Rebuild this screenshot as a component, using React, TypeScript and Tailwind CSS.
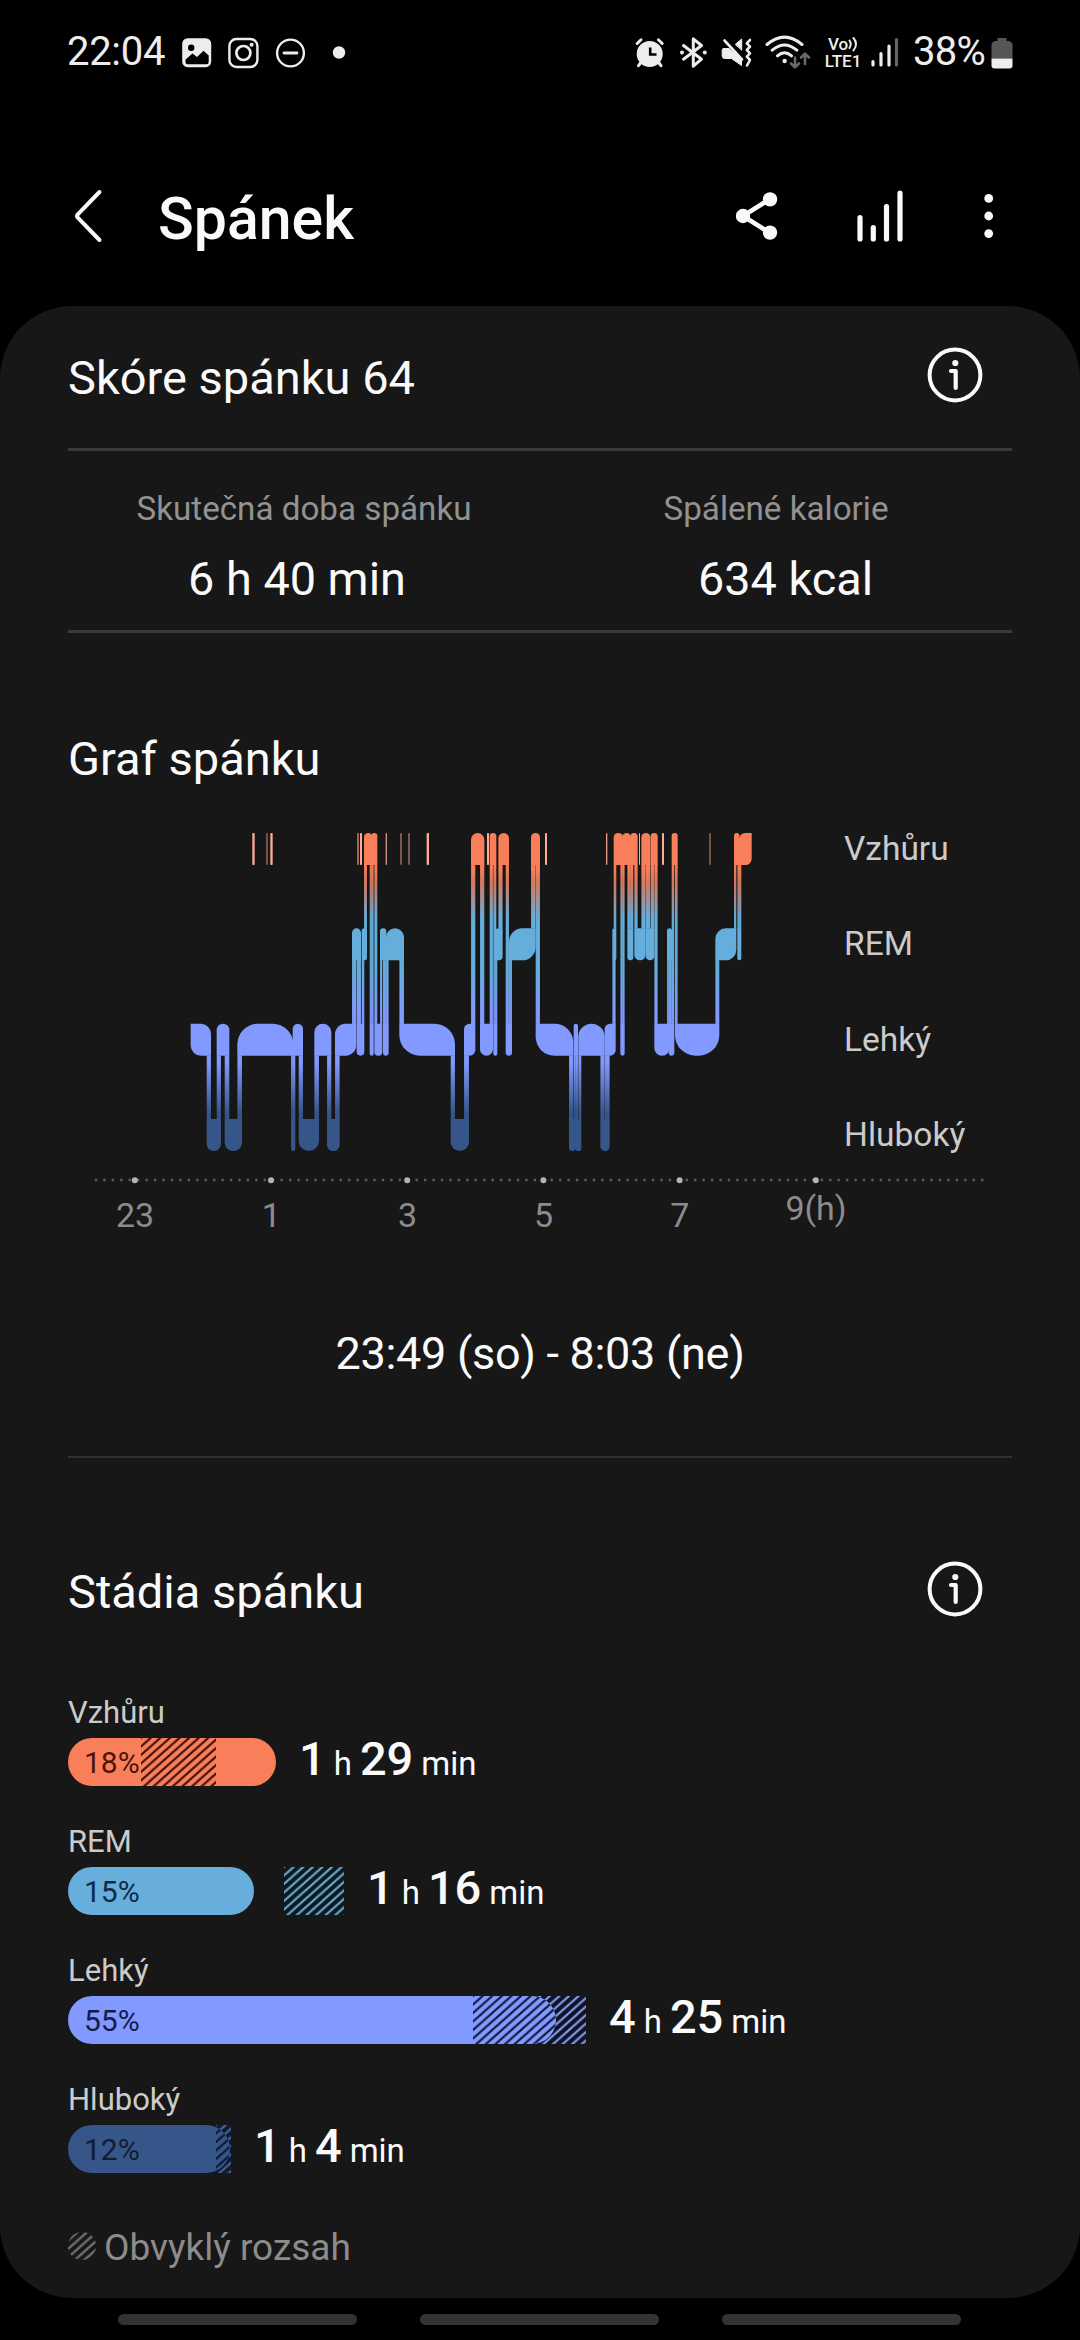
import { useId } from 'react';

type Stage = 0 | 1 | 2 | 3;

interface StageSegment {
  start: number;
  end: number;
  stage: Stage;
}

// plot units: 3 per pixel, stage rows are 286 apart and 96 tall
const ROW_PITCH = 286;
const ROW_HEIGHT = 96;

const rawSegments: [number, number, Stage][] = [
  [92, 153, 2], [140, 183, 3], [170, 208, 2], [194, 246, 3], [232, 400, 2], [393, 406, 3],
  [398, 429, 2], [416, 477, 3], [463, 514, 2], [501, 539, 3], [525, 589, 2], [576, 603, 1],
  [590, 613, 2], [605, 621, 1], [612, 637, 0], [629, 641, 2], [634, 652, 0], [643, 667, 2],
  [660, 679, 1], [669, 686, 2], [678, 732, 1], [718, 885, 2], [872, 927, 3], [912, 946, 2],
  [933, 973, 0], [960, 999, 2], [989, 1009, 0], [1000, 1012, 2], [1005, 1028, 1], [1015, 1047, 0],
  [1037, 1056, 2], [1047, 1127, 1], [1113, 1140, 0], [1127, 1240, 2], [1227, 1248, 3], [1241, 1254, 2],
  [1247, 1264, 3], [1255, 1334, 2], [1321, 1349, 3], [1334, 1367, 2], [1357, 1369, 1], [1361, 1389, 0],
  [1381, 1394, 2], [1387, 1413, 0], [1402, 1420, 1], [1411, 1433, 0], [1423, 1457, 1], [1444, 1471, 0],
  [1457, 1483, 1], [1472, 1493, 0], [1483, 1529, 2], [1521, 1536, 1], [1526, 1543, 2], [1535, 1553, 0],
  [1545, 1678, 2], [1666, 1729, 1], [1722, 1738, 0], [1732, 1744, 1], [1737, 1775, 0],
];

const segments: StageSegment[] = rawSegments.map(([start, end, stage]) => ({ start, end, stage }));

// short wake-ups: x, width, opacity
const wakeTicks: [number, number, number][] = [
  [277, 7, 1], [319, 4, 0.6], [331, 7, 1], [591, 6, 0.55], [600, 6, 1], [677, 4, 0.85], [721, 4, 0.65],
  [745, 4, 0.65], [800, 7, 1], [981, 6, 1], [1155, 6, 1], [1338, 4, 0.9], [1437, 3, 1], [1506, 6, 1],
  [1648, 4, 0.6],
];

const blockPath = (seg: StageSegment, prev?: StageSegment, next?: StageSegment) => {
  const { start: l, end: r, stage } = seg;
  const radius = Math.min((r - l) / 2, 62);
  const t = stage * ROW_PITCH;
  const b = t + ROW_HEIGHT;
  const leftDown = prev ? prev.stage > stage : false;
  const rightDown = next ? next.stage > stage : false;
  const tl = leftDown ? radius : 0;
  const bl = leftDown ? 0 : radius;
  const tr = rightDown ? radius : 0;
  const br = rightDown ? 0 : radius;
  return `M${l + tl} ${t}H${r - tr}A${tr} ${tr} 0 0 1 ${r} ${t + tr}V${b - br}A${br} ${br} 0 0 1 ${r - br} ${b}H${l + bl}A${bl} ${bl} 0 0 1 ${l} ${b - bl}V${t + tl}A${tl} ${tl} 0 0 1 ${l + tl} ${t}Z`;
};

const SleepPlot = () => (
  <svg className="ml-[92px] h-[318px] w-[592px] shrink-0" viewBox="0 0 1776 954">
    <defs>
      <linearGradient id="stages" gradientUnits="userSpaceOnUse" x1="0" y1="0" x2="0" y2="954">
        <stop offset="0" stopColor="#f97f5a" />
        <stop offset="0.11" stopColor="#f97f5a" />
        <stop offset="0.155" stopColor="#d5795f" />
        <stop offset="0.27" stopColor="#65aedb" />
        <stop offset="0.42" stopColor="#65aedb" />
        <stop offset="0.58" stopColor="#8299ff" />
        <stop offset="0.72" stopColor="#8299ff" />
        <stop offset="0.88" stopColor="#36568a" />
        <stop offset="1" stopColor="#36568a" />
      </linearGradient>
    </defs>
    {wakeTicks.map(([x, width, opacity]) => (
      <rect key={x} x={x} y="0" width={width} height={ROW_HEIGHT} rx="2" fill="#ffab93" opacity={opacity} />
    ))}
    {segments.slice(1).map((seg, i) => {
      const prev = segments[i];
      const top = Math.min(prev.stage, seg.stage) * ROW_PITCH + ROW_HEIGHT - 1;
      const bottom = Math.max(prev.stage, seg.stage) * ROW_PITCH + 1;
      return (
        <path
          key={seg.start}
          d={`M${seg.start} ${top}H${prev.end}V${bottom}H${seg.start}Z`}
          fill="url(#stages)"
          stroke="#171717"
          strokeOpacity="0.35"
          strokeWidth="1"
        />
      );
    })}
    {segments.map((seg, i) => (
      <path key={seg.start} d={blockPath(seg, segments[i - 1], segments[i + 1])} fill="url(#stages)" />
    ))}
  </svg>
);

const TimeAxis = () => (
  <svg className="mt-[24px] ml-[22px] h-[10px] w-[900px]" viewBox="0 0 900 10">
    {Array.from({ length: 106 }, (_, i) => (
      <circle key={i} cx={6 + i * 8.44} cy="5" r="1.4" fill="#5a5a5a" />
    ))}
    {[0, 1, 2, 3, 4, 5].map((i) => (
      <circle key={i} cx={44.8 + i * 136.2} cy="5.3" r="3" fill="#b4b4b4" />
    ))}
  </svg>
);

interface HatchProps {
  width: number;
  height?: number;
  color: string;
  thickness: number;
}

const Hatch = ({ width, height = 48, color, thickness }: HatchProps) => {
  const id = useId();
  return (
    <svg width={width} height={height} className="block">
      <defs>
        <pattern id={id} width="9.6" height="8.5" patternUnits="userSpaceOnUse">
          <path d="M-4.8 12.75L14.4 -4.25M-4.8 4.25L4.8 -4.25M4.8 12.75L14.4 4.25" stroke={color} strokeWidth={thickness} />
        </pattern>
      </defs>
      <rect width={width} height={height} fill={`url(#${id})`} />
    </svg>
  );
};

interface StageRow {
  name: string;
  percent: string;
  hours: number;
  minutes: number;
  bar: number;
  from: number;
  to: number;
  barClass: string;
  textClass: string;
  rangeClass: string;
  dark: string;
  light: string;
}

const stageRows: StageRow[] = [
  {
    name: 'Vzhůru', percent: '18%', hours: 1, minutes: 29, bar: 208, from: 73, to: 148,
    barClass: 'bg-[#f97f5a]', textClass: 'text-[#4a130b]', rangeClass: 'bg-[#2a0f0a]', dark: '#3b0d0b', light: '#e9806a',
  },
  {
    name: 'REM', percent: '15%', hours: 1, minutes: 16, bar: 186, from: 216, to: 276,
    barClass: 'bg-[#67aedc]', textClass: 'text-[#0c2c42]', rangeClass: 'bg-[#0b1922]', dark: '#0b2433', light: '#6fabcb',
  },
  {
    name: 'Lehký', percent: '55%', hours: 4, minutes: 25, bar: 488, from: 405, to: 518,
    barClass: 'bg-[#8299ff]', textClass: 'text-[#131c4a]', rangeClass: 'bg-[#0e1428]', dark: '#0f1838', light: '#8b9be8',
  },
  {
    name: 'Hluboký', percent: '12%', hours: 1, minutes: 4, bar: 162, from: 148, to: 163,
    barClass: 'bg-[#36568a]', textClass: 'text-[#101c30]', rangeClass: 'bg-[#0f1b2e]', dark: '#0c1830', light: '#49679a',
  },
];

const StageBar = ({ row }: { row: StageRow }) => (
  <div className="mb-[37px]">
    <div className="h-[36px] pt-px text-[31px] leading-[36px] text-[#cbcbcb]">{row.name}</div>
    <div className="mt-[8px] flex h-[48px] items-center">
      <div className="relative h-[48px] shrink-0" style={{ width: Math.max(row.bar, row.to) }}>
        <div className={`absolute top-0 ${row.rangeClass}`} style={{ left: row.from }}>
          <Hatch width={row.to - row.from} color={row.light} thickness={2.1} />
        </div>
        <div className={`relative flex h-[48px] items-center overflow-hidden rounded-full pl-[16px] ${row.barClass}`} style={{ width: row.bar }}>
          <div className="absolute top-0" style={{ left: row.from }}>
            <Hatch width={row.to - row.from} color={row.dark} thickness={2.1} />
          </div>
          <span className={`pt-px text-[30px] leading-none ${row.textClass}`}>{row.percent}</span>
        </div>
      </div>
      <div className="mb-px ml-[23px] flex items-baseline gap-[8px] text-[33px] leading-[48px] text-[#fafafa]">
        <span className="text-[47px] font-medium">{row.hours}</span>
        <span>h</span>
        <span className="text-[47px] font-medium">{row.minutes}</span>
        <span>min</span>
      </div>
    </div>
  </div>
);

const InfoIcon = () => (
  <svg className="mr-[29px] mb-[5px] size-[56px]" viewBox="0 0 56 56" fill="none" stroke="#fafafa" strokeLinecap="round">
    <circle cx="28" cy="28" r="25.4" strokeWidth="4" />
    <circle cx="28.3" cy="16" r="3.1" fill="#fafafa" stroke="none" />
    <path d="M24 24H28.7V41" strokeWidth="4.2" strokeLinejoin="round" />
  </svg>
);

const StatusBar = () => (
  <div className="flex h-[103px] items-center justify-between pr-[67px] pl-[67px] text-[40px] leading-none text-[#ededed]">
    <div className="flex items-center">
      <span className="w-[115px] tracking-[-0.3px]">22:04</span>
      <svg className="mt-[2px] h-[32px] w-[164px]" viewBox="0 0 164 32" fill="none" stroke="#ededed">
        <rect x="1.2" y="2.2" width="27" height="27" rx="4.5" fill="#ededed" strokeWidth="2" />
        <circle cx="9.2" cy="10.8" r="3.2" fill="#000" stroke="none" />
        <path d="M3.5 22.5L10.5 16.5L15 20L21.5 13.8L26.7 18.5V25Q26.7 27.2 24.5 27.2H5.5Q3.5 27.2 3.5 25Z" fill="#000" stroke="none" />
        <rect x="47.4" y="2" width="28" height="28" rx="7" strokeWidth="2.4" />
        <circle cx="61.4" cy="16" r="7" strokeWidth="2.7" />
        <circle cx="69.6" cy="7.8" r="2" fill="#ededed" stroke="none" />
        <circle cx="108.5" cy="16" r="13.4" strokeWidth="2.4" />
        <path d="M102 16H115" strokeWidth="2.8" strokeLinecap="round" />
        <circle cx="157" cy="15.5" r="6.2" fill="#ededed" stroke="none" />
      </svg>
    </div>
    <div className="flex items-center">
      <svg className="h-[36px] w-[180px]" viewBox="0 0 180 36" fill="none" stroke="#ededed" strokeLinecap="round" strokeLinejoin="round">
        <circle cx="15.7" cy="20" r="13" fill="#ededed" stroke="none" />
        <path d="M3.2 9.5L7 5.8M28.2 9.5L24.4 5.8M6.5 29L4.5 31.7M25 29L27 31.7" strokeWidth="3" />
        <path d="M16.2 13.5V20.5H22.5" stroke="#000" strokeWidth="2.6" strokeLinecap="butt" strokeLinejoin="miter" />
        <path d="M49.5 11.5L67.5 25.2L59.3 32.2V4.8L67.5 11.5L49.5 25.2" strokeWidth="3" />
        <circle cx="48" cy="18.4" r="2" fill="#ededed" stroke="none" />
        <circle cx="70.8" cy="18.4" r="2" fill="#ededed" stroke="none" />
        <path d="M89.5 14.5H95L107.5 26V31.5L97.5 24.5H91Q88.2 24.5 88.2 22V16Q88.2 14.5 89.5 14.5Z" fill="#ededed" strokeWidth="1" />
        <path d="M101.5 10.2L107.7 5V15.8Z" fill="#ededed" strokeWidth="1" />
        <path d="M90.5 6.5L108 25.5" strokeWidth="2.6" />
        <path d="M116 6L112.8 9.3L116 12.6L112.8 16L116 19.3L112.8 22.6L116 26L113 31.5" strokeWidth="2.6" />
        <path d="M133 10.5Q150.5 -4.3 168 10.5M138.2 16.2Q150.5 5.8 162.8 16.2M143.5 21.8Q150.5 15.8 157.5 21.8" strokeWidth="3" />
        <circle cx="150.7" cy="27" r="2.2" fill="#ededed" stroke="none" />
        <path d="M161 23.5V33M157 29.5L161 33.3L165 29.5M171 30V20.2M167 23.5L171 19.7L175 23.5" stroke="#686868" strokeWidth="2.6" />
      </svg>
      <div className="ml-[9px] flex w-[40px] flex-col items-center gap-px pt-[2px] text-[17px] font-medium">
        <span className="flex h-[16px] items-center leading-[16px]">
          Vo
          <svg className="h-[16px] w-[10px]" viewBox="0 0 10 16" fill="none" stroke="#ededed" strokeWidth="2" strokeLinecap="round">
            <path d="M1.5 4.5Q4 8 1.5 12M5.5 2Q10.5 8 5.5 14.5" />
          </svg>
        </span>
        <span className="h-[16px] leading-[16px]">LTE1</span>
      </div>
      <svg className="ml-[8px] h-[32px] w-[28px]" viewBox="0 0 28 32" fill="none" stroke="#ededed" strokeWidth="3.2" strokeLinecap="round">
        <path d="M2 25.5V29M10 17.5V29M18 10V29" />
        <path d="M25.5 3.5V29" stroke="#666" />
      </svg>
      <span className="ml-[14px] w-[78px] tracking-[-0.7px]">38%</span>
      <svg className="mt-[2px] h-[32px] w-[22px]" viewBox="0 0 22 32">
        <path d="M6.5 1H15.5V4H18Q21.5 5 21.5 8V21.5H.5V8Q.5 5 4 4H6.5Z" fill="#565656" />
        <path d="M.5 21.5H21.5V28.5Q21.5 31.5 18.5 31.5H3.5Q.5 31.5 .5 28.5Z" fill="#ededed" />
      </svg>
    </div>
  </div>
);

const Header = () => (
  <div className="flex h-[203px] items-center pt-[23px] pl-[73px]">
    <svg className="h-[56px] w-[32px]" viewBox="0 0 32 56" fill="none" stroke="#fafafa" strokeWidth="4" strokeLinecap="round" strokeLinejoin="round">
      <path d="M26.5 4L4.8 26.4Q3.2 28 4.8 29.6L26.5 52" />
    </svg>
    <h1 className="ml-[53px] pt-[5px] text-[59px] leading-none font-medium text-[#fafafa]">Spánek</h1>
    <svg className="mr-[84px] ml-auto h-[56px] w-[260px]" viewBox="0 0 260 56" fill="#fafafa" stroke="#fafafa">
      <path d="M34 11L7 28L34 45" fill="none" strokeWidth="4.6" />
      <circle cx="7" cy="28" r="7.2" stroke="none" />
      <circle cx="34" cy="11.4" r="7.2" stroke="none" />
      <circle cx="34" cy="44.6" r="7.2" stroke="none" />
      <path d="M124 29.5V51M137.3 39.5V51M150.5 18.5V51M164 5V51" strokeWidth="5.2" strokeLinecap="round" />
      <circle cx="252.7" cy="10.4" r="4.4" stroke="none" />
      <circle cx="252.7" cy="28" r="4.4" stroke="none" />
      <circle cx="252.7" cy="45.6" r="4.4" stroke="none" />
    </svg>
  </div>
);

const App = () => {
  return (
    <div className="h-[2340px] w-[1080px] overflow-hidden bg-black font-['Roboto',sans-serif]">
      <StatusBar />
      <Header />

      <main className="h-[1992px] rounded-[72px] bg-[#171717] px-[68px] text-[#fafafa]">
        <div className="flex h-[142px] items-center justify-between">
          <h2 className="text-[47px] leading-none">Skóre spánku 64</h2>
          <InfoIcon />
        </div>

        <div className="grid h-[185px] grid-cols-2 border-y-[3px] border-[#3a3a3a] pt-[38px] text-center">
          <div>
            <div className="text-[33.2px] leading-[40px] text-[#929292]">Skutečná doba spánku</div>
            <div className="mt-[20px] pr-[14px] text-[46.8px] leading-[60px]">6 h 40 min</div>
          </div>
          <div>
            <div className="text-[33.2px] leading-[40px] text-[#929292]">Spálené kalorie</div>
            <div className="mt-[20px] pl-[19px] text-[46.8px] leading-[60px]">634 kcal</div>
          </div>
        </div>

        <h2 className="mt-[96px] text-[47px] leading-[60px]">Graf spánku</h2>
        <div className="mt-[44px] flex">
          <SleepPlot />
          <div className="ml-[92px] flex h-[318px] flex-col justify-between text-[33.5px] leading-[32px] text-[#cbcbcb]">
            <span>Vzhůru</span>
            <span>REM</span>
            <span>Lehký</span>
            <span>Hluboký</span>
          </div>
        </div>
        <TimeAxis />
        <div className="mt-[10px] -ml-px flex h-[40px] text-center text-[34px] leading-[40px] text-[#8c8c8c]">
          {['23', '1', '3', '5', '7'].map((hour) => (
            <span key={hour} className="w-[136.2px]">{hour}</span>
          ))}
          <span className="-mt-[7px] w-[136.2px]">9(h)</span>
        </div>

        <div className="mt-[89px] text-center text-[45px] leading-[60px] tracking-[-0.3px]">23:49 (so) - 8:03 (ne)</div>
        <div className="mt-[72px] h-[2px] bg-[#303030]" />

        <div className="mt-[103px] mb-[73px] flex h-[60px] items-center justify-between">
          <h2 className="text-[47px] leading-none">Stádia spánku</h2>
          <InfoIcon />
        </div>
        {stageRows.map((row) => (
          <StageBar key={row.name} row={row} />
        ))}

        <div className="mt-[53px] flex h-[44px] items-center">
          <div className="mb-[4px] size-[28px] overflow-hidden rounded-full">
            <Hatch width={28} height={28} color="#6e6e6e" thickness={2.4} />
          </div>
          <span className="ml-[8px] text-[37px] leading-[44px] text-[#8c8c8c]">Obvyklý rozsah</span>
        </div>
      </main>

      <div className="mt-[16px] flex gap-[63px] pl-[118px]">
        <div className="h-[11px] w-[239px] rounded-full bg-[#333]" />
        <div className="h-[11px] w-[239px] rounded-full bg-[#333]" />
        <div className="h-[11px] w-[239px] rounded-full bg-[#333]" />
      </div>
    </div>
  );
};

export default App;
